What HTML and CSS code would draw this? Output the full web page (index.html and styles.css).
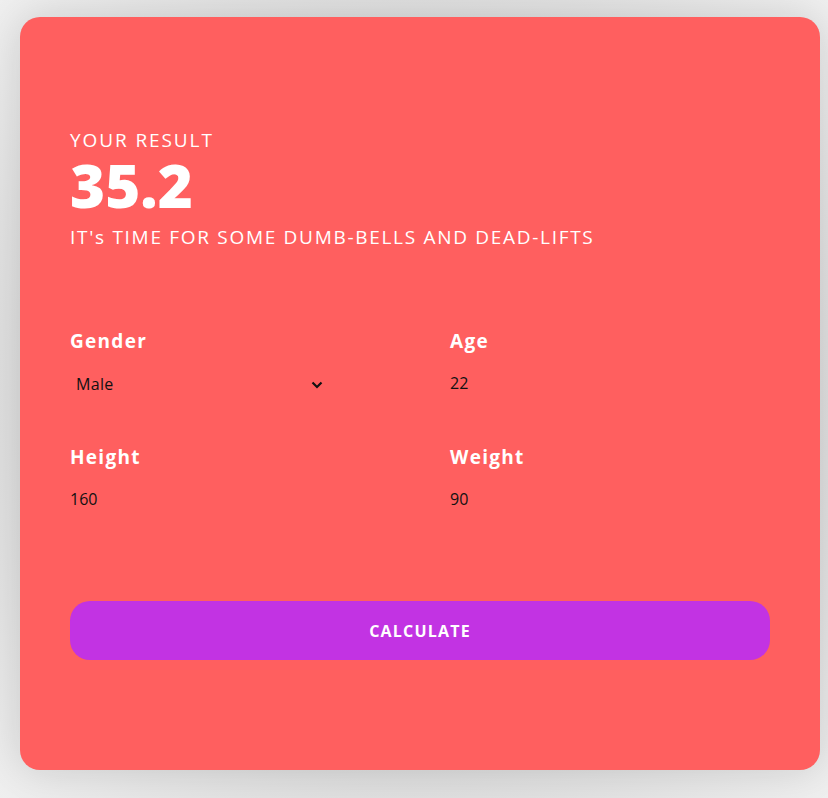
FILE: index.html
```html
<!DOCTYPE html>
<html lang="en">
<head>
<meta charset="utf-8">
<title>BMI Calculator</title>
<link rel="stylesheet" href="styles.css">
</head>
<body>
<main class="card">
  <section class="result">
    <p class="result-label">YOUR RESULT</p>
    <p class="result-score">35.2</p>
    <p class="result-message">IT's TIME FOR SOME DUMB-BELLS AND DEAD-LIFTS</p>
  </section>
  <form class="form">
    <div class="field">
      <label class="field-label" for="gender">Gender</label>
      <div class="select-wrap">
        <select id="gender" class="select">
          <option>Male</option>
          <option>Female</option>
        </select>
        <svg class="chevron" width="12" height="8" viewBox="0 0 12 8"><path d="M1.5 1.5 L6 6 L10.5 1.5" fill="none" stroke="#111" stroke-width="2.2"/></svg>
      </div>
    </div>
    <div class="field">
      <label class="field-label" for="age">Age</label>
      <input id="age" class="input" type="text" value="22">
    </div>
    <div class="field">
      <label class="field-label" for="height">Height</label>
      <input id="height" class="input" type="text" value="160">
    </div>
    <div class="field">
      <label class="field-label" for="weight">Weight</label>
      <input id="weight" class="input" type="text" value="90">
    </div>
    <button type="button" class="button">CALCULATE</button>
  </form>
</main>
</body>
</html>
```
FILE: styles.css
```css
html, body {
  margin: 0;
  padding: 0;
}
body {
  background: radial-gradient(ellipse at center, #c9c9c9 0%, #d6d6d6 55%, #efefef 100%);
  min-height: 798px;
  padding: 17px 0 0 20px;
  box-sizing: border-box;
  font-family: "Open Sans", "DejaVu Sans", sans-serif;
  overflow: hidden;
}
.card {
  width: 800px;
  height: 753px;
  box-sizing: border-box;
  background: #ff5f5f;
  border-radius: 20px;
  padding: 112px 50px 0 50px;
  box-shadow: 0 0 40px rgba(0, 0, 0, 0.12);
}
.result p {
  margin: 0;
  color: #fff;
}
.result-label {
  font-size: 19px;
  line-height: 22px;
  letter-spacing: 1.9px;
}
.result-score {
  font-size: 60px;
  line-height: 60px;
  font-weight: 800;
  margin-top: 4px !important;
}
.result-message {
  font-size: 19px;
  line-height: 22px;
  letter-spacing: 1.7px;
  margin-top: 11px !important;
}
.form {
  display: grid;
  grid-template-columns: 380px 320px;
  row-gap: 51px;
  margin-top: 81px;
}
.field {
  display: flex;
  flex-direction: column;
  gap: 20px;
}
.field-label {
  color: #fff;
  font-weight: 700;
  font-size: 19px;
  line-height: 24px;
  letter-spacing: 1.3px;
}
.select-wrap {
  display: flex;
  align-items: center;
  width: 253px;
  height: 20px;
  padding-top: 1px;
}
.select {
  appearance: none;
  -webkit-appearance: none;
  flex: 1;
  border: none;
  background: transparent;
  font-family: inherit;
  font-size: 16px;
  line-height: 20px;
  letter-spacing: 0.3px;
  color: #111;
  padding: 0 0 0 6px;
  margin: 0;
  outline: none;
}
.chevron {
  flex: none;
  margin-top: 1px;
}
.input {
  border: none;
  background: transparent;
  font-family: inherit;
  font-size: 16px;
  line-height: 20px;
  height: 20px;
  color: #111;
  padding: 0;
  margin: 0;
  outline: none;
  width: 200px;
}
.button {
  grid-column: 1 / -1;
  margin-top: 41px;
  height: 59px;
  border: none;
  border-radius: 20px;
  background: #c233e3;
  color: #fff;
  font-family: inherit;
  font-weight: 700;
  font-size: 16px;
  letter-spacing: 1.2px;
  cursor: pointer;
}
```
